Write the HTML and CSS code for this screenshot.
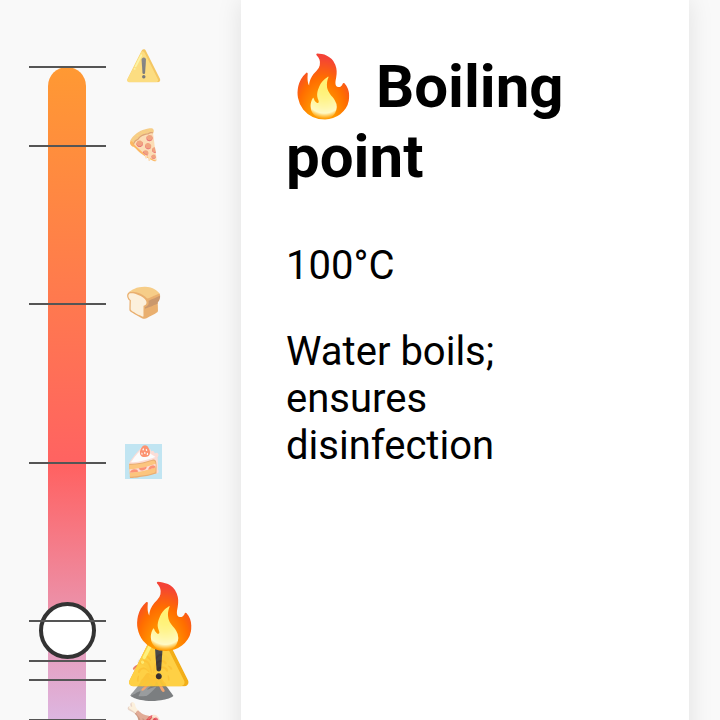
FILE: index.html
```html
<!DOCTYPE html>
<html lang="en">
<head>
<meta charset="utf-8">
<meta name="viewport" content="width=device-width, initial-scale=1">
<title>Temperature scale</title>
<link rel="stylesheet" href="styles.css">
</head>
<body>
<main class="app">
  <section class="scale" aria-label="Temperature scale">
    <div class="bar"></div>
    <div class="thumb"></div>
    <div class="mark m500"><i class="tick"></i><span class="icon">⚠️</span></div>
    <div class="mark m400"><i class="tick"></i><span class="icon">🍕</span></div>
    <div class="mark m300"><i class="tick"></i><span class="icon">🍞</span></div>
    <div class="mark m200"><i class="tick"></i><span class="icon picked">🍰</span></div>
    <div class="mark m60"><i class="tick"></i><span class="icon">🍗</span></div>
    <div class="mark m55"><i class="tick"></i><span class="icon">🥩</span></div>
    <div class="mark m75"><i class="tick"></i><span class="icon near">🌋</span></div>
    <div class="mark m85"><i class="tick"></i><span class="icon nearer">⚠️</span></div>
    <div class="mark m100"><i class="tick"></i><span class="icon active">🔥</span></div>
  </section>
  <article class="card">
    <h1>🔥 Boiling point</h1>
    <p>100°C</p>
    <p>Water boils; ensures disinfection</p>
  </article>
</main>
</body>
</html>
```
FILE: styles.css
```css
* {
  box-sizing: border-box;
}

body {
  margin: 0;
  background: #f9f9f9;
  color: #000;
  font-family: Roboto, sans-serif;
  font-size: 40px;
}

.app {
  display: grid;
  grid-template-columns: 241px 1fr 31px;
  height: 100vh;
  overflow: hidden;
}

.scale {
  position: relative;
}

.bar {
  width: 38px;
  height: 864px;
  margin: 67px 0 0 48px;
  border-radius: 19px;
  background: linear-gradient(#ff9933 0, #ff6262 400px, #ddb5e0 650px, #d8c0ee 100%);
}

/* Markers sit on the scale at their temperature. */
.mark {
  position: absolute;
  left: 29px;
  display: flex;
  align-items: center;
  gap: 19px;
  height: 0;
}

.m500 { top: 67px; }
.m400 { top: 146px; }
.m300 { top: 304px; }
.m200 { top: 463px; }
.m100 { top: 621px; }
.m85 { top: 661px; }
.m75 { top: 680px; }
.m60 { top: 720px; }
.m55 { top: 732px; }

.tick {
  width: 77px;
  height: 2px;
  background: #555;
}

.icon {
  margin-bottom: 4px;
  font-size: 30px;
  line-height: 35px;
  opacity: 0.6;
}

.picked {
  background: #9cd8ee;
}

.near {
  margin-bottom: 6px;
  font-size: 43px;
  opacity: 0.7;
}

.nearer {
  margin-bottom: 10px;
  font-size: 54px;
  opacity: 0.9;
}

.active {
  margin-bottom: 10px;
  font-size: 63px;
  opacity: 1;
}

.thumb {
  position: absolute;
  top: 602px;
  left: 39px;
  width: 57px;
  height: 57px;
  border: 4px solid #333;
  border-radius: 50%;
  background: #fff;
}

.card {
  padding: 52px 45px;
  background: #fff;
  box-shadow: 0 0 24px rgba(0, 0, 0, 0.1);
}

h1 {
  margin: 0 0 50px;
  font-size: 60px;
  line-height: 70px;
}

p {
  margin: 0 0 39px;
  line-height: 47px;
}
```
